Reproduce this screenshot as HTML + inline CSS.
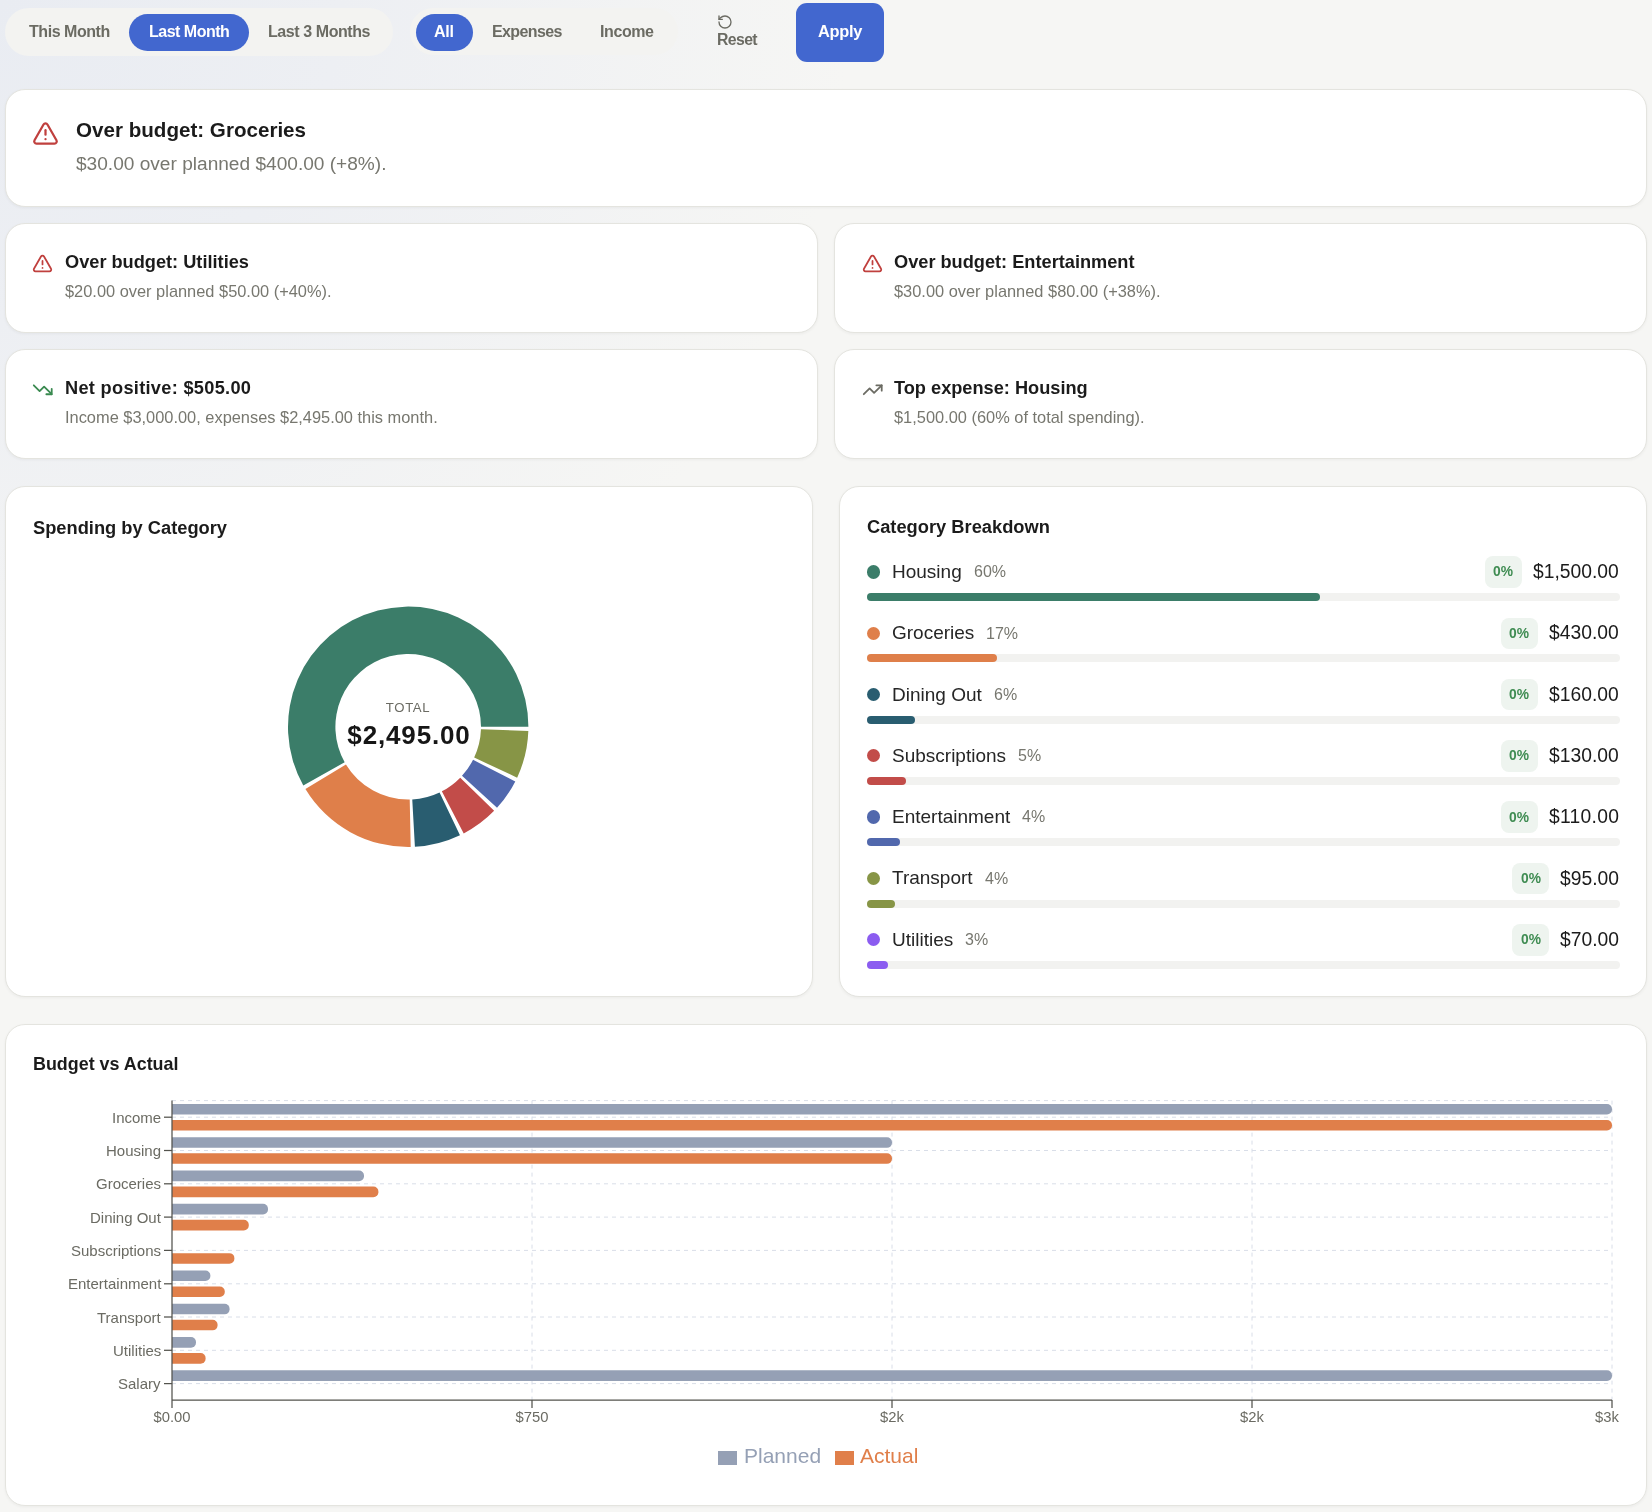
<!DOCTYPE html>
<html><head><meta charset="utf-8"><title>Budget Dashboard</title>
<style>
html,body{margin:0;padding:0;}
body{width:1652px;height:1512px;position:relative;overflow:hidden;font-family:"Liberation Sans",sans-serif;
background:radial-gradient(ellipse 850px 800px at 0px 0px, #e9ecf2 0%, #edeff3 40%, #f6f6f4 100%);}
.t{position:absolute;white-space:nowrap;line-height:1;will-change:transform;}
.b{position:absolute;}
svg.b{overflow:visible;}
</style></head><body>
<div class="b" style="left:5px;top:8px;width:388px;height:48px;background:#f3f3f1;border-radius:24px;"></div>
<div class="b" style="left:129px;top:14px;width:120px;height:37px;background:#4267cf;border-radius:19px;"></div>
<div class="t" style="left:29.0px;top:23.76px;font-size:16px;font-weight:700;color:#6b6b63;letter-spacing:-0.45px;">This Month</div>
<div class="t" style="left:148.8px;top:23.76px;font-size:16px;font-weight:700;color:#fff;letter-spacing:-0.5px;">Last Month</div>
<div class="t" style="left:268.0px;top:23.76px;font-size:16px;font-weight:700;color:#6b6b63;letter-spacing:-0.42px;">Last 3 Months</div>
<div class="b" style="left:410px;top:8px;width:268px;height:47px;background:#f3f3f1;border-radius:24px;"></div>
<div class="b" style="left:415.7px;top:13.8px;width:57.3px;height:37px;background:#4267cf;border-radius:19px;"></div>
<div class="t" style="left:434.2px;top:23.76px;font-size:16px;font-weight:700;color:#fff;letter-spacing:-0.3px;">All</div>
<div class="t" style="left:492.3px;top:23.76px;font-size:16px;font-weight:700;color:#6b6b63;letter-spacing:-0.6px;">Expenses</div>
<div class="t" style="left:600.0px;top:23.76px;font-size:16px;font-weight:700;color:#6b6b63;letter-spacing:-0.4px;">Income</div>
<svg class="b" style="left:717px;top:14px" width="16" height="16" viewBox="0 0 24 24" fill="none" stroke="#6b6b63" stroke-width="2" stroke-linecap="round" stroke-linejoin="round"><path d="M3 12a9 9 0 1 0 9-9 9.75 9.75 0 0 0-6.74 2.74L3 8"/><path d="M3 3v5h5"/></svg>
<div class="t" style="left:717.0px;top:31.63px;font-size:15.8px;font-weight:700;color:#6b6b63;letter-spacing:-0.6px;">Reset</div>
<div class="b" style="left:796px;top:3px;width:88px;height:59px;background:#4267cf;border-radius:11px;"></div>
<div class="t" style="left:818.0px;top:23.42px;font-size:16.4px;font-weight:700;color:#fff;letter-spacing:-0.3px;">Apply</div>
<div class="b" style="left:5px;top:89px;width:1642px;height:118px;background:#fff;border:1px solid #e4e4df;border-radius:20px;box-sizing:border-box;box-shadow:0 1px 3px rgba(40,40,30,0.05);"></div>
<svg class="b" style="left:31.7px;top:120px" width="27" height="27" viewBox="0 0 24 24" fill="none" stroke="#c0403e" stroke-width="2" stroke-linecap="round" stroke-linejoin="round"><path d="m21.73 18-8-14a2 2 0 0 0-3.48 0l-8 14A2 2 0 0 0 4 21h16a2 2 0 0 0 1.73-3"/><path d="M12 9v4"/><path d="M12 17h.01"/></svg>
<div class="t" style="left:75.7px;top:120.16px;font-size:20.6px;font-weight:700;color:#1b1b1b;">Over budget: Groceries</div>
<div class="t" style="left:75.7px;top:153.63px;font-size:19.1px;font-weight:400;color:#77776f;">$30.00 over planned $400.00 (+8%).</div>
<div class="b" style="left:5px;top:223px;width:813px;height:110px;background:#fff;border:1px solid #e4e4df;border-radius:20px;box-sizing:border-box;box-shadow:0 1px 3px rgba(40,40,30,0.05);"></div>
<div class="b" style="left:5px;top:349px;width:813px;height:110px;background:#fff;border:1px solid #e4e4df;border-radius:20px;box-sizing:border-box;box-shadow:0 1px 3px rgba(40,40,30,0.05);"></div>
<div class="b" style="left:834px;top:223px;width:813px;height:110px;background:#fff;border:1px solid #e4e4df;border-radius:20px;box-sizing:border-box;box-shadow:0 1px 3px rgba(40,40,30,0.05);"></div>
<div class="b" style="left:834px;top:349px;width:813px;height:110px;background:#fff;border:1px solid #e4e4df;border-radius:20px;box-sizing:border-box;box-shadow:0 1px 3px rgba(40,40,30,0.05);"></div>
<svg class="b" style="left:32px;top:253.2px" width="21" height="21" viewBox="0 0 24 24" fill="none" stroke="#c0403e" stroke-width="2" stroke-linecap="round" stroke-linejoin="round"><path d="m21.73 18-8-14a2 2 0 0 0-3.48 0l-8 14A2 2 0 0 0 4 21h16a2 2 0 0 0 1.73-3"/><path d="M12 9v4"/><path d="M12 17h.01"/></svg>
<div class="t" style="left:65.0px;top:252.59px;font-size:18.2px;font-weight:700;color:#1b1b1b;">Over budget: Utilities</div>
<div class="t" style="left:65.0px;top:283.12px;font-size:16.4px;font-weight:400;color:#77776f;">$20.00 over planned $50.00 (+40%).</div>
<svg class="b" style="left:861.8px;top:253.2px" width="21" height="21" viewBox="0 0 24 24" fill="none" stroke="#c0403e" stroke-width="2" stroke-linecap="round" stroke-linejoin="round"><path d="m21.73 18-8-14a2 2 0 0 0-3.48 0l-8 14A2 2 0 0 0 4 21h16a2 2 0 0 0 1.73-3"/><path d="M12 9v4"/><path d="M12 17h.01"/></svg>
<div class="t" style="left:894.0px;top:252.59px;font-size:18.2px;font-weight:700;color:#1b1b1b;">Over budget: Entertainment</div>
<div class="t" style="left:894.0px;top:283.12px;font-size:16.4px;font-weight:400;color:#77776f;">$30.00 over planned $80.00 (+38%).</div>
<svg class="b" style="left:31.7px;top:378.5px" width="21.5" height="21.5" viewBox="0 0 24 24" fill="none" stroke="#3a8a50" stroke-width="2" stroke-linecap="round" stroke-linejoin="round"><polyline points="22 17 13.5 8.5 8.5 13.5 2 7"/><polyline points="16 17 22 17 22 11"/></svg>
<div class="t" style="left:65.0px;top:378.59px;font-size:18.2px;font-weight:700;color:#1b1b1b;letter-spacing:0.3px;">Net positive: $505.00</div>
<div class="t" style="left:65.0px;top:409.12px;font-size:16.4px;font-weight:400;color:#77776f;">Income $3,000.00, expenses $2,495.00 this month.</div>
<svg class="b" style="left:861.7px;top:378.5px" width="21.5" height="21.5" viewBox="0 0 24 24" fill="none" stroke="#6b6b63" stroke-width="2" stroke-linecap="round" stroke-linejoin="round"><polyline points="22 7 13.5 15.5 8.5 10.5 2 17"/><polyline points="16 7 22 7 22 13"/></svg>
<div class="t" style="left:894.0px;top:378.59px;font-size:18.2px;font-weight:700;color:#1b1b1b;">Top expense: Housing</div>
<div class="t" style="left:894.0px;top:409.12px;font-size:16.4px;font-weight:400;color:#77776f;">$1,500.00 (60% of total spending).</div>
<div class="b" style="left:5px;top:486px;width:808px;height:511px;background:#fff;border:1px solid #e4e4df;border-radius:20px;box-sizing:border-box;box-shadow:0 1px 3px rgba(40,40,30,0.05);"></div>
<div class="b" style="left:839px;top:486px;width:808px;height:511px;background:#fff;border:1px solid #e4e4df;border-radius:20px;box-sizing:border-box;box-shadow:0 1px 3px rgba(40,40,30,0.05);"></div>
<div class="t" style="left:32.9px;top:518.51px;font-size:18.3px;font-weight:700;color:#1b1b1b;">Spending by Category</div>
<div class="t" style="left:867.3px;top:518.11px;font-size:18.3px;font-weight:700;color:#1b1b1b;">Category Breakdown</div>
<svg class="b" style="left:0;top:0" width="1652" height="1512"><path d="M528.40,726.80 A120.2,120.2 0 1 0 303.29,785.47 L344.66,762.34 A72.8,72.8 0 1 1 481.00,726.80 Z" fill="#3b7d69"/><path d="M305.41,789.10 A120.2,120.2 0 0 0 410.71,846.97 L409.72,799.58 A72.8,72.8 0 0 1 345.94,764.53 Z" fill="#df7f4a"/><path d="M414.90,846.81 A120.2,120.2 0 0 0 459.97,835.28 L439.55,792.50 A72.8,72.8 0 0 1 412.26,799.49 Z" fill="#295d70"/><path d="M463.72,833.41 A120.2,120.2 0 0 0 494.14,810.83 L460.25,777.70 A72.8,72.8 0 0 1 441.83,791.37 Z" fill="#c24c49"/><path d="M497.02,807.78 A120.2,120.2 0 0 0 515.29,781.40 L473.06,759.87 A72.8,72.8 0 0 1 462.00,775.85 Z" fill="#5168ad"/><path d="M517.13,777.63 A120.2,120.2 0 0 0 528.33,730.99 L480.96,729.34 A72.8,72.8 0 0 1 474.17,757.58 Z" fill="#879546"/></svg>
<div class="t" style="left:108.2px;width:600px;text-align:center;top:700.73px;font-size:13.2px;font-weight:400;color:#6b6b63;letter-spacing:0.6px;">TOTAL</div>
<div class="t" style="left:109.1px;width:600px;text-align:center;top:722.19px;font-size:26px;font-weight:700;color:#161616;letter-spacing:0.85px;">$2,495.00</div>
<div class="b" style="left:866.8px;top:565.1999999999999px;width:13.4px;height:13.4px;background:#3b7d69;border-radius:50%;"></div>
<div class="t" style="left:892.0px;top:561.92px;font-size:19px;font-weight:400;color:#262626;">Housing</div>
<div class="t" style="left:973.7px;top:564.26px;font-size:16px;font-weight:400;color:#77776f;">60%</div>
<div class="t" style="right:33.0px;top:562.16px;font-size:19.3px;font-weight:400;color:#1b1b1b;">$1,500.00</div>
<div class="b" style="left:1485px;top:556.1999999999999px;width:36.8px;height:31.5px;background:#eef4ef;border-radius:8px;"></div>
<div class="t" style="left:1203.4px;width:600px;text-align:center;top:565.42px;font-size:13.8px;font-weight:700;color:#3f8c52;">0%</div>
<div class="b" style="left:866.8px;top:593.0px;width:753px;height:8px;background:#f2f2f0;border-radius:4px;"></div>
<div class="b" style="left:866.8px;top:593.0px;width:452.7054108216433px;height:8px;background:#3b7d69;border-radius:4px;"></div>
<div class="b" style="left:866.8px;top:626.4999999999999px;width:13.4px;height:13.4px;background:#df7f4a;border-radius:50%;"></div>
<div class="t" style="left:892.0px;top:623.22px;font-size:19px;font-weight:400;color:#262626;">Groceries</div>
<div class="t" style="left:986.4px;top:625.56px;font-size:16px;font-weight:400;color:#77776f;">17%</div>
<div class="t" style="right:33.0px;top:623.46px;font-size:19.3px;font-weight:400;color:#1b1b1b;">$430.00</div>
<div class="b" style="left:1501px;top:617.4999999999999px;width:36.8px;height:31.5px;background:#eef4ef;border-radius:8px;"></div>
<div class="t" style="left:1219.4px;width:600px;text-align:center;top:626.72px;font-size:13.8px;font-weight:700;color:#3f8c52;">0%</div>
<div class="b" style="left:866.8px;top:654.3px;width:753px;height:8px;background:#f2f2f0;border-radius:4px;"></div>
<div class="b" style="left:866.8px;top:654.3px;width:129.77555110220442px;height:8px;background:#df7f4a;border-radius:4px;"></div>
<div class="b" style="left:866.8px;top:687.8px;width:13.4px;height:13.4px;background:#295d70;border-radius:50%;"></div>
<div class="t" style="left:892.0px;top:684.52px;font-size:19px;font-weight:400;color:#262626;">Dining Out</div>
<div class="t" style="left:993.8px;top:686.86px;font-size:16px;font-weight:400;color:#77776f;">6%</div>
<div class="t" style="right:33.0px;top:684.76px;font-size:19.3px;font-weight:400;color:#1b1b1b;">$160.00</div>
<div class="b" style="left:1501px;top:678.8px;width:36.8px;height:31.5px;background:#eef4ef;border-radius:8px;"></div>
<div class="t" style="left:1219.4px;width:600px;text-align:center;top:688.02px;font-size:13.8px;font-weight:700;color:#3f8c52;">0%</div>
<div class="b" style="left:866.8px;top:715.6px;width:753px;height:8px;background:#f2f2f0;border-radius:4px;"></div>
<div class="b" style="left:866.8px;top:715.6px;width:48.28857715430862px;height:8px;background:#295d70;border-radius:4px;"></div>
<div class="b" style="left:866.8px;top:749.0999999999999px;width:13.4px;height:13.4px;background:#c24c49;border-radius:50%;"></div>
<div class="t" style="left:892.0px;top:745.82px;font-size:19px;font-weight:400;color:#262626;">Subscriptions</div>
<div class="t" style="left:1018.1px;top:748.16px;font-size:16px;font-weight:400;color:#77776f;">5%</div>
<div class="t" style="right:33.0px;top:746.06px;font-size:19.3px;font-weight:400;color:#1b1b1b;">$130.00</div>
<div class="b" style="left:1501px;top:740.0999999999999px;width:36.8px;height:31.5px;background:#eef4ef;border-radius:8px;"></div>
<div class="t" style="left:1219.4px;width:600px;text-align:center;top:749.32px;font-size:13.8px;font-weight:700;color:#3f8c52;">0%</div>
<div class="b" style="left:866.8px;top:776.9px;width:753px;height:8px;background:#f2f2f0;border-radius:4px;"></div>
<div class="b" style="left:866.8px;top:776.9px;width:39.234468937875754px;height:8px;background:#c24c49;border-radius:4px;"></div>
<div class="b" style="left:866.8px;top:810.3999999999999px;width:13.4px;height:13.4px;background:#5168ad;border-radius:50%;"></div>
<div class="t" style="left:892.0px;top:807.12px;font-size:19px;font-weight:400;color:#262626;">Entertainment</div>
<div class="t" style="left:1022.3px;top:809.46px;font-size:16px;font-weight:400;color:#77776f;">4%</div>
<div class="t" style="right:33.0px;top:807.36px;font-size:19.3px;font-weight:400;color:#1b1b1b;letter-spacing:0.27px;">$110.00</div>
<div class="b" style="left:1501px;top:801.3999999999999px;width:36.8px;height:31.5px;background:#eef4ef;border-radius:8px;"></div>
<div class="t" style="left:1219.4px;width:600px;text-align:center;top:810.62px;font-size:13.8px;font-weight:700;color:#3f8c52;">0%</div>
<div class="b" style="left:866.8px;top:838.1999999999999px;width:753px;height:8px;background:#f2f2f0;border-radius:4px;"></div>
<div class="b" style="left:866.8px;top:838.1999999999999px;width:33.19839679358717px;height:8px;background:#5168ad;border-radius:4px;"></div>
<div class="b" style="left:866.8px;top:871.6999999999999px;width:13.4px;height:13.4px;background:#879546;border-radius:50%;"></div>
<div class="t" style="left:892.0px;top:868.42px;font-size:19px;font-weight:400;color:#262626;">Transport</div>
<div class="t" style="left:984.6px;top:870.76px;font-size:16px;font-weight:400;color:#77776f;">4%</div>
<div class="t" style="right:33.0px;top:868.66px;font-size:19.3px;font-weight:400;color:#1b1b1b;">$95.00</div>
<div class="b" style="left:1512.3px;top:862.6999999999999px;width:36.8px;height:31.5px;background:#eef4ef;border-radius:8px;"></div>
<div class="t" style="left:1230.7px;width:600px;text-align:center;top:871.92px;font-size:13.8px;font-weight:700;color:#3f8c52;">0%</div>
<div class="b" style="left:866.8px;top:899.5px;width:753px;height:8px;background:#f2f2f0;border-radius:4px;"></div>
<div class="b" style="left:866.8px;top:899.5px;width:28.671342685370742px;height:8px;background:#879546;border-radius:4px;"></div>
<div class="b" style="left:866.8px;top:932.9999999999999px;width:13.4px;height:13.4px;background:#8b5cf0;border-radius:50%;"></div>
<div class="t" style="left:892.0px;top:929.72px;font-size:19px;font-weight:400;color:#262626;">Utilities</div>
<div class="t" style="left:965.2px;top:932.06px;font-size:16px;font-weight:400;color:#77776f;">3%</div>
<div class="t" style="right:33.0px;top:929.96px;font-size:19.3px;font-weight:400;color:#1b1b1b;">$70.00</div>
<div class="b" style="left:1512.3px;top:923.9999999999999px;width:36.8px;height:31.5px;background:#eef4ef;border-radius:8px;"></div>
<div class="t" style="left:1230.7px;width:600px;text-align:center;top:933.22px;font-size:13.8px;font-weight:700;color:#3f8c52;">0%</div>
<div class="b" style="left:866.8px;top:960.8px;width:753px;height:8px;background:#f2f2f0;border-radius:4px;"></div>
<div class="b" style="left:866.8px;top:960.8px;width:21.12625250501002px;height:8px;background:#8b5cf0;border-radius:4px;"></div>
<div class="b" style="left:5px;top:1024px;width:1642px;height:482px;background:#fff;border:1px solid #e4e4df;border-radius:20px;box-sizing:border-box;box-shadow:0 1px 3px rgba(40,40,30,0.05);"></div>
<div class="t" style="left:32.5px;top:1056.35px;font-size:17.9px;font-weight:700;color:#1b1b1b;">Budget vs Actual</div>
<svg class="b" style="left:0;top:0" width="1652" height="1512"><line x1="172" y1="1117.2" x2="1612" y2="1117.2" stroke="#d9dee8" stroke-dasharray="4 4"/><line x1="172" y1="1150.5" x2="1612" y2="1150.5" stroke="#d9dee8" stroke-dasharray="4 4"/><line x1="172" y1="1183.8" x2="1612" y2="1183.8" stroke="#d9dee8" stroke-dasharray="4 4"/><line x1="172" y1="1217.1" x2="1612" y2="1217.1" stroke="#d9dee8" stroke-dasharray="4 4"/><line x1="172" y1="1250.4" x2="1612" y2="1250.4" stroke="#d9dee8" stroke-dasharray="4 4"/><line x1="172" y1="1283.8" x2="1612" y2="1283.8" stroke="#d9dee8" stroke-dasharray="4 4"/><line x1="172" y1="1317.0" x2="1612" y2="1317.0" stroke="#d9dee8" stroke-dasharray="4 4"/><line x1="172" y1="1350.3" x2="1612" y2="1350.3" stroke="#d9dee8" stroke-dasharray="4 4"/><line x1="172" y1="1383.6" x2="1612" y2="1383.6" stroke="#d9dee8" stroke-dasharray="4 4"/><line x1="172" y1="1100.6" x2="1612" y2="1100.6" stroke="#d9dee8" stroke-dasharray="4 4"/><line x1="532" y1="1100.6" x2="532" y2="1400" stroke="#d9dee8" stroke-dasharray="4 4"/><line x1="892" y1="1100.6" x2="892" y2="1400" stroke="#d9dee8" stroke-dasharray="4 4"/><line x1="1252" y1="1100.6" x2="1252" y2="1400" stroke="#d9dee8" stroke-dasharray="4 4"/><line x1="1612" y1="1100.6" x2="1612" y2="1400" stroke="#d9dee8" stroke-dasharray="4 4"/><path d="M172,1103.95 H1607.0 A5,5 0 0 1 1612.0,1108.95 V1109.55 A5,5 0 0 1 1607.0,1114.55 H172 Z" fill="#95a0b5"/><path d="M172,1119.95 H1607.0 A5,5 0 0 1 1612.0,1124.95 V1125.55 A5,5 0 0 1 1607.0,1130.55 H172 Z" fill="#e07f4a"/><path d="M172,1137.25 H887.0 A5,5 0 0 1 892.0,1142.25 V1142.85 A5,5 0 0 1 887.0,1147.85 H172 Z" fill="#95a0b5"/><path d="M172,1153.25 H887.0 A5,5 0 0 1 892.0,1158.25 V1158.85 A5,5 0 0 1 887.0,1163.85 H172 Z" fill="#e07f4a"/><path d="M172,1170.55 H359.0 A5,5 0 0 1 364.0,1175.55 V1176.1499999999999 A5,5 0 0 1 359.0,1181.1499999999999 H172 Z" fill="#95a0b5"/><path d="M172,1186.55 H373.4 A5,5 0 0 1 378.4,1191.55 V1192.1499999999999 A5,5 0 0 1 373.4,1197.1499999999999 H172 Z" fill="#e07f4a"/><path d="M172,1203.85 H263.0 A5,5 0 0 1 268.0,1208.85 V1209.4499999999998 A5,5 0 0 1 263.0,1214.4499999999998 H172 Z" fill="#95a0b5"/><path d="M172,1219.85 H243.8 A5,5 0 0 1 248.8,1224.85 V1225.4499999999998 A5,5 0 0 1 243.8,1230.4499999999998 H172 Z" fill="#e07f4a"/><path d="M172,1253.1499999999999 H229.4 A5,5 0 0 1 234.4,1258.1499999999999 V1258.7499999999998 A5,5 0 0 1 229.4,1263.7499999999998 H172 Z" fill="#e07f4a"/><path d="M172,1270.45 H205.4 A5,5 0 0 1 210.4,1275.45 V1276.05 A5,5 0 0 1 205.4,1281.05 H172 Z" fill="#95a0b5"/><path d="M172,1286.45 H219.8 A5,5 0 0 1 224.8,1291.45 V1292.05 A5,5 0 0 1 219.8,1297.05 H172 Z" fill="#e07f4a"/><path d="M172,1303.75 H224.6 A5,5 0 0 1 229.6,1308.75 V1309.35 A5,5 0 0 1 224.6,1314.35 H172 Z" fill="#95a0b5"/><path d="M172,1319.75 H212.6 A5,5 0 0 1 217.6,1324.75 V1325.35 A5,5 0 0 1 212.6,1330.35 H172 Z" fill="#e07f4a"/><path d="M172,1337.05 H191.0 A5,5 0 0 1 196.0,1342.05 V1342.6499999999999 A5,5 0 0 1 191.0,1347.6499999999999 H172 Z" fill="#95a0b5"/><path d="M172,1353.05 H200.6 A5,5 0 0 1 205.6,1358.05 V1358.6499999999999 A5,5 0 0 1 200.6,1363.6499999999999 H172 Z" fill="#e07f4a"/><path d="M172,1370.35 H1607.0 A5,5 0 0 1 1612.0,1375.35 V1375.9499999999998 A5,5 0 0 1 1607.0,1380.9499999999998 H172 Z" fill="#95a0b5"/><line x1="172" y1="1100.6" x2="172" y2="1400" stroke="#53534d" stroke-width="1.25"/><line x1="172" y1="1400" x2="1612" y2="1400" stroke="#53534d" stroke-width="1.25"/><line x1="164" y1="1117.2" x2="172" y2="1117.2" stroke="#53534d" stroke-width="1.25"/><line x1="164" y1="1150.5" x2="172" y2="1150.5" stroke="#53534d" stroke-width="1.25"/><line x1="164" y1="1183.8" x2="172" y2="1183.8" stroke="#53534d" stroke-width="1.25"/><line x1="164" y1="1217.1" x2="172" y2="1217.1" stroke="#53534d" stroke-width="1.25"/><line x1="164" y1="1250.4" x2="172" y2="1250.4" stroke="#53534d" stroke-width="1.25"/><line x1="164" y1="1283.8" x2="172" y2="1283.8" stroke="#53534d" stroke-width="1.25"/><line x1="164" y1="1317.0" x2="172" y2="1317.0" stroke="#53534d" stroke-width="1.25"/><line x1="164" y1="1350.3" x2="172" y2="1350.3" stroke="#53534d" stroke-width="1.25"/><line x1="164" y1="1383.6" x2="172" y2="1383.6" stroke="#53534d" stroke-width="1.25"/><line x1="172" y1="1400" x2="172" y2="1408" stroke="#53534d" stroke-width="1.25"/><line x1="532" y1="1400" x2="532" y2="1408" stroke="#53534d" stroke-width="1.25"/><line x1="892" y1="1400" x2="892" y2="1408" stroke="#53534d" stroke-width="1.25"/><line x1="1252" y1="1400" x2="1252" y2="1408" stroke="#53534d" stroke-width="1.25"/><line x1="1612" y1="1400" x2="1612" y2="1408" stroke="#53534d" stroke-width="1.25"/></svg>
<div class="t" style="right:1491.0px;top:1109.75px;font-size:15px;font-weight:400;color:#6b6b63;">Income</div>
<div class="t" style="right:1491.0px;top:1143.05px;font-size:15px;font-weight:400;color:#6b6b63;">Housing</div>
<div class="t" style="right:1491.0px;top:1176.35px;font-size:15px;font-weight:400;color:#6b6b63;">Groceries</div>
<div class="t" style="right:1491.0px;top:1209.65px;font-size:15px;font-weight:400;color:#6b6b63;">Dining Out</div>
<div class="t" style="right:1491.0px;top:1242.95px;font-size:15px;font-weight:400;color:#6b6b63;">Subscriptions</div>
<div class="t" style="right:1491.0px;top:1276.25px;font-size:15px;font-weight:400;color:#6b6b63;">Entertainment</div>
<div class="t" style="right:1491.0px;top:1309.55px;font-size:15px;font-weight:400;color:#6b6b63;">Transport</div>
<div class="t" style="right:1491.0px;top:1342.85px;font-size:15px;font-weight:400;color:#6b6b63;">Utilities</div>
<div class="t" style="right:1491.0px;top:1376.15px;font-size:15px;font-weight:400;color:#6b6b63;">Salary</div>
<div class="t" style="left:-128.0px;width:600px;text-align:center;top:1409.87px;font-size:14.8px;font-weight:400;color:#6b6b63;">$0.00</div>
<div class="t" style="left:232.0px;width:600px;text-align:center;top:1409.87px;font-size:14.8px;font-weight:400;color:#6b6b63;">$750</div>
<div class="t" style="left:592.0px;width:600px;text-align:center;top:1409.87px;font-size:14.8px;font-weight:400;color:#6b6b63;">$2k</div>
<div class="t" style="left:952.0px;width:600px;text-align:center;top:1409.87px;font-size:14.8px;font-weight:400;color:#6b6b63;">$2k</div>
<div class="t" style="left:1307.0px;width:600px;text-align:center;top:1409.87px;font-size:14.8px;font-weight:400;color:#6b6b63;">$3k</div>
<div class="b" style="left:718px;top:1451px;width:19px;height:14px;background:#95a0b5;"></div>
<div class="t" style="left:743.6px;top:1445.22px;font-size:21px;font-weight:400;color:#95a0b5;">Planned</div>
<div class="b" style="left:835px;top:1451px;width:19px;height:14px;background:#e07f4a;"></div>
<div class="t" style="left:859.8px;top:1445.22px;font-size:21px;font-weight:400;color:#e07f4a;">Actual</div>
</body></html>
